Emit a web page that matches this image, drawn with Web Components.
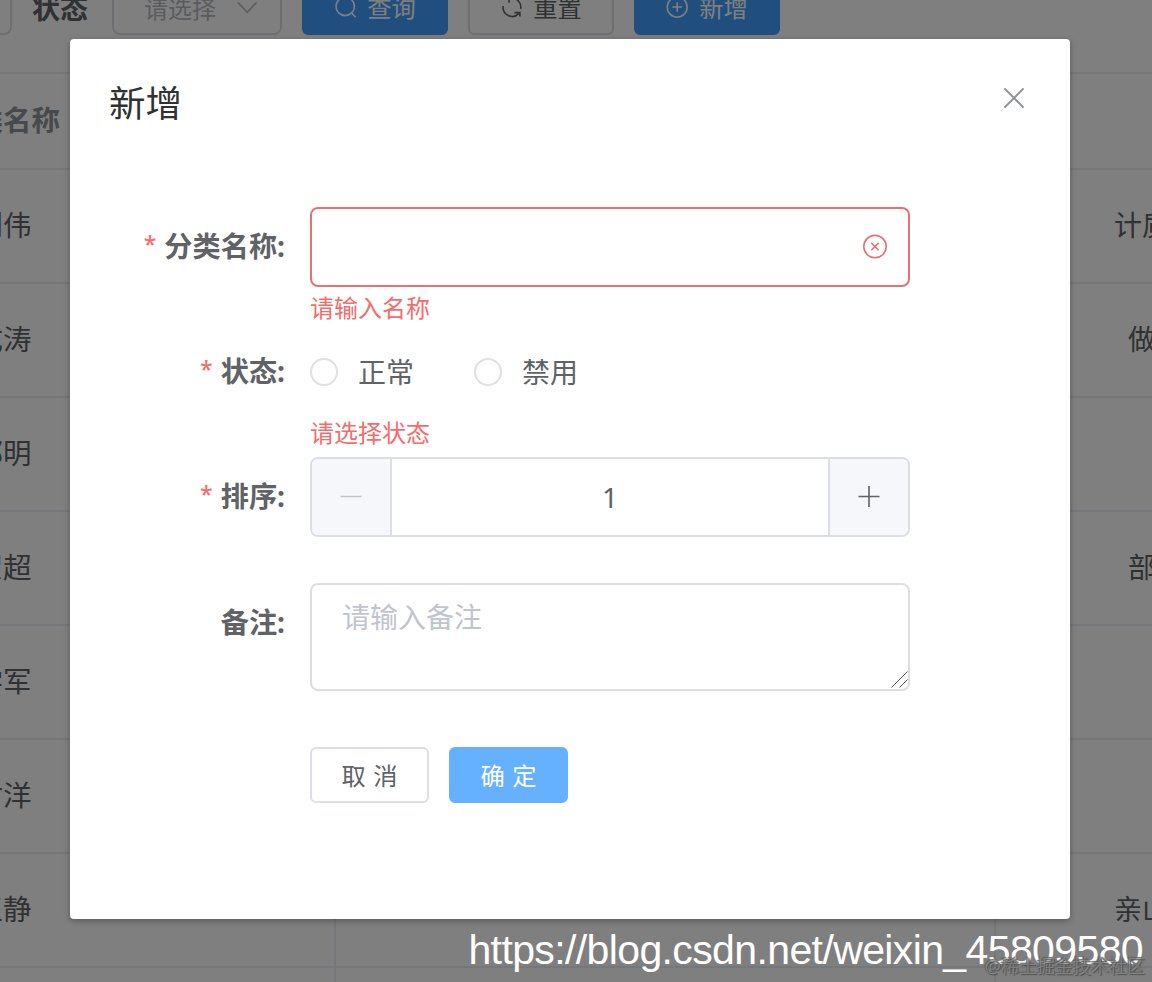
<!DOCTYPE html>
<html lang="zh-CN">
<head>
<meta charset="UTF-8">
<title>新增</title>
<style>
    html, body {
        margin: 0;
        width: 1152px;
        height: 982px;
        overflow: hidden;
    }
    body {
        position: relative;
        background: #fff;
        color: #606266;
        font-family: "Noto Sans", "Noto Sans CJK SC", sans-serif;
        font-size: 28px;
    }
</style>
</head>
<body>
<list-page>
    <filter-bar slot="filter"></filter-bar>
    <data-table slot="table"></data-table>
</list-page>

<modal-dialog heading="新增">
    <form-item label="分类名称" required error="请输入名称">
        <text-field></text-field>
    </form-item>
    <form-item label="状态" required error="请选择状态">
        <radio-option>正常</radio-option>
        <radio-option>禁用</radio-option>
    </form-item>
    <form-item label="排序" required last-gap="46">
        <number-stepper value="1"></number-stepper>
    </form-item>
    <form-item label="备注" last-gap="56">
        <text-area placeholder="请输入备注"></text-area>
    </form-item>
    <ui-button slot="footer">取 消</ui-button>
    <ui-button slot="footer" type="primary" active>确 定</ui-button>
</modal-dialog>

<page-watermark></page-watermark>

<script>
const ICONS = {
    search: '<circle cx="11.2" cy="11.4" r="9.2"/><path d="M17.7 18l3.8 4.2"/>',
    refresh: '<path d="M9 3.6A9 9 0 0 1 20.6 14M3.2 11A9 9 0 0 0 18.6 18.6M4 3.2h5v4.6M19.9 21.6v-4h-5.4"/>',
    plusCircle: '<circle cx="11.2" cy="12" r="10"/><path d="M11.2 7.2v9.6M6.4 12h9.6"/>',
    down: '<path d="M2 7.5l9.2 9.8L20.4 7.5"/>',
    close: '<path d="M2.4 2.4l19.2 19.2M21.6 2.4L2.4 21.6"/>',
    closeCircle: '<circle cx="12" cy="11.6" r="11.2"/><path d="M8.3 7.9l7.4 7.4M15.7 7.9l-7.4 7.4"/>',
    minus: '<path d="M1.5 11.5h21"/>',
    plus: '<path d="M1.5 11.5h21M12 1v21"/>'
};

class UiIcon extends HTMLElement {
    constructor() {
        super();
        this.attachShadow({ mode: 'open' });
    }

    connectedCallback() {
        const size = this.getAttribute('size') || 24;
        const weight = this.getAttribute('weight') || 1.6;
        this.shadowRoot.innerHTML = `
            <style>
                :host { display: block; flex: none; width: ${size}px; height: ${size}px; }
                svg { display: block; }
            </style>
            <svg width="${size}" height="${size}" viewBox="0 0 24 24" fill="none" overflow="visible"
                 stroke="currentColor" stroke-width="${weight}">${ICONS[this.getAttribute('name')]}</svg>
        `;
    }
}

class UiButton extends HTMLElement {
    constructor() {
        super();
        this.attachShadow({ mode: 'open' });
    }

    connectedCallback() {
        const icon = this.getAttribute('icon');
        this.shadowRoot.innerHTML = `
            <style>
                :host {
                    display: flex;
                    align-items: center;
                    justify-content: center;
                    gap: 9px;
                    box-sizing: border-box;
                    min-width: 119px;
                    height: 56px;
                    border: 2px solid #dcdfe6;
                    border-radius: 6px;
                    background: #fff;
                    color: #606266;
                    font-size: 24.3px;
                    line-height: 53px;
                    word-spacing: 1px;
                    white-space: nowrap;
                }
                :host([icon]) { width: 146px; }
                :host([type=primary]) { background: #409eff; border-color: #409eff; color: #fff; }
                :host([active]) { background: #66b1ff; border-color: #66b1ff; }
            </style>
            ${icon ? `<ui-icon name="${icon}"></ui-icon>` : ''}
            <span><slot></slot></span>
        `;
    }
}

class FilterBar extends HTMLElement {
    constructor() {
        super();
        this.attachShadow({ mode: 'open' });
    }

    connectedCallback() {
        this.shadowRoot.innerHTML = `
            <style>
                :host { display: flex; align-items: center; height: 56px; }
                .box {
                    display: flex;
                    align-items: center;
                    justify-content: space-between;
                    box-sizing: border-box;
                    height: 56px;
                    border: 2px solid #dcdfe6;
                    border-radius: 8px;
                    font-size: 24px;
                    color: #b4b8c0;
                }
                .keyword { width: 340px; margin-left: -328px; }
                .label { margin: 0 24px 0 20px; font-weight: 700; }
                .select { width: 170px; padding: 0 20px 0 30px; margin-right: 20px; }
                .buttons { display: flex; gap: 20px; }
            </style>
            <div class="box keyword"></div>
            <span class="label">状态</span>
            <div class="box select"><span>请选择</span><ui-icon name="down"></ui-icon></div>
            <div class="buttons">
                <ui-button type="primary" icon="search">查询</ui-button>
                <ui-button icon="refresh">重置</ui-button>
                <ui-button type="primary" icon="plusCircle">新增</ui-button>
            </div>
        `;
    }
}

class DataTable extends HTMLElement {
    constructor() {
        super();
        this.attachShadow({ mode: 'open' });
    }

    connectedCallback() {
        // name, description, left inset of the description
        const rows = [
            ['刘伟', '计质', 118],
            ['成涛', '做', 132],
            ['郭明', '', 0],
            ['翟超', '部', 132],
            ['学军', '', 0],
            ['付洋', '', 0],
            ['王静', '亲山', 118]
        ];
        this.shadowRoot.innerHTML = `
            <style>
                :host { display: block; width: 1482px; margin-left: -330px; border-top: 2px solid #ebeef5; }
                .row {
                    display: grid;
                    grid-template-columns: 666px 660px 156px;
                    height: 114px;
                    box-sizing: border-box;
                    border-bottom: 2px solid #ebeef5;
                    line-height: 110px;
                }
                .head { height: 96px; line-height: 93px; color: #909399; font-weight: 700; }
                .row > div { box-sizing: border-box; border-right: 2px solid #ebeef5; white-space: nowrap; }
                .row > div:last-child { border-right: 0; }
                .name { text-align: center; padding-left: 2px; font-size: 28.5px; }
            </style>
            <div class="row head"><div class="name">分类名称</div><div></div><div></div></div>
            ${rows.map(([name, desc, inset]) => `
                <div class="row">
                    <div class="name">${name}</div>
                    <div></div>
                    <div style="padding-left: ${inset}px">${desc}</div>
                </div>
            `).join('')}
            <div class="row"><div></div><div></div><div></div></div>
        `;
    }
}

class ListPage extends HTMLElement {
    constructor() {
        super();
        this.attachShadow({ mode: 'open' });
    }

    connectedCallback() {
        // scrolled a little, so the filter bar is cut by the top edge
        this.shadowRoot.innerHTML = `
            <style>
                :host { display: block; height: 982px; overflow: hidden; }
                .page { display: flex; flex-direction: column; gap: 37px; margin-top: -21px; }
            </style>
            <div class="page">
                <slot name="filter"></slot>
                <slot name="table"></slot>
            </div>
        `;
    }
}

class ModalDialog extends HTMLElement {
    constructor() {
        super();
        this.attachShadow({ mode: 'open' });
    }

    connectedCallback() {
        this.shadowRoot.innerHTML = `
            <style>
                :host {
                    position: absolute;
                    inset: 0;
                    display: flex;
                    justify-content: center;
                    align-items: flex-start;
                    background: rgba(0, 0, 0, 0.5);
                }
                .dialog {
                    box-sizing: border-box;
                    width: 1000px;
                    height: 880px;
                    margin: 39px 12px 0 0;
                    border-radius: 4px;
                    background: #fff;
                    box-shadow: 0 2px 6px rgba(0, 0, 0, 0.3);
                }
                header {
                    display: flex;
                    justify-content: space-between;
                    align-items: center;
                    height: 48px;
                    padding: 40px 44px 80px 39px;
                    color: #303133;
                    font-size: 36.5px;
                    line-height: 48px;
                }
                header ui-icon { color: #909399; margin-bottom: 10px; }
                .body { padding: 0 160px 0 40px; }
                footer { display: flex; gap: 20px; padding-left: 200px; }
            </style>
            <div class="dialog">
                <header>
                    <span>${this.getAttribute('heading')}</span>
                    <ui-icon name="close" weight="2"></ui-icon>
                </header>
                <div class="body">
                    <slot></slot>
                    <footer><slot name="footer"></slot></footer>
                </div>
            </div>
        `;
    }
}

class FormItem extends HTMLElement {
    constructor() {
        super();
        this.attachShadow({ mode: 'open' });
    }

    connectedCallback() {
        const error = this.getAttribute('error') || '';
        const gap = this.getAttribute('last-gap') || 45;
        this.shadowRoot.innerHTML = `
            <style>
                :host { display: flex; }
                .label {
                    display: flex;
                    justify-content: flex-end;
                    box-sizing: border-box;
                    width: 200px;
                    padding-right: 25px;
                    font-size: 28.2px;
                    font-weight: 700;
                    line-height: 79px;
                    height: 80px;
                }
                .label i {
                    margin-right: 8px;
                    color: #f56c6c;
                    font-size: 23px;
                    font-style: normal;
                    font-weight: 500;
                    line-height: 74px;
                }
                .content { flex: 1; }
                .control { display: flex; align-items: center; min-height: 80px; }
                .tip { height: ${gap}px; font-size: 24px; line-height: 42px; color: #f56c6c; }
            </style>
            <div class="label">${this.hasAttribute('required') ? '<i>*</i>' : ''}${this.getAttribute('label')}:</div>
            <div class="content">
                <div class="control"><slot></slot></div>
                <div class="tip">${error}</div>
            </div>
        `;
    }
}

class TextField extends HTMLElement {
    constructor() {
        super();
        this.attachShadow({ mode: 'open' });
    }

    connectedCallback() {
        this.shadowRoot.innerHTML = `
            <style>
                :host {
                    display: flex;
                    flex: 1;
                    align-items: center;
                    justify-content: flex-end;
                    box-sizing: border-box;
                    height: 80px;
                    padding-right: 21px;
                    border: 2px solid #e57273;
                    border-radius: 8px;
                    color: #e57273;
                }
            </style>
            <ui-icon name="closeCircle"></ui-icon>
        `;
    }
}

class RadioOption extends HTMLElement {
    constructor() {
        super();
        this.attachShadow({ mode: 'open' });
    }

    connectedCallback() {
        this.shadowRoot.innerHTML = `
            <style>
                :host { display: flex; align-items: center; gap: 20px; margin-right: 60px; line-height: 78px; height: 80px; }
                i { box-sizing: border-box; width: 28px; height: 28px; border: 2px solid #dfe0e3; border-radius: 50%; }
            </style>
            <i></i><span><slot></slot></span>
        `;
    }
}

class NumberStepper extends HTMLElement {
    constructor() {
        super();
        this.attachShadow({ mode: 'open' });
    }

    connectedCallback() {
        this.shadowRoot.innerHTML = `
            <style>
                :host {
                    display: grid;
                    flex: 1;
                    grid-template-columns: 80px 1fr 80px;
                    box-sizing: border-box;
                    height: 80px;
                    border: 2px solid #dcdfe2;
                    border-radius: 8px;
                    overflow: hidden;
                }
                div { display: flex; align-items: center; justify-content: center; box-sizing: border-box; }
                .step { background: #f5f7fa; }
                .minus { border-right: 2px solid #dcdfe2; color: #c0c4cc; }
                .plus { border-left: 2px solid #dcdfe2; }
            </style>
            <div class="step minus"><ui-icon name="minus" weight="1.6"></ui-icon></div>
            <div>${this.getAttribute('value')}</div>
            <div class="step plus"><ui-icon name="plus" weight="1.6"></ui-icon></div>
        `;
    }
}

class TextArea extends HTMLElement {
    constructor() {
        super();
        this.attachShadow({ mode: 'open' });
    }

    connectedCallback() {
        this.shadowRoot.innerHTML = `
            <style>
                :host {
                    display: flex;
                    flex: 1;
                    justify-content: space-between;
                    align-items: flex-end;
                    box-sizing: border-box;
                    height: 108px;
                    border: 2px solid #dcdfe2;
                    border-radius: 8px;
                    color: #c0c4cc;
                }
                span { align-self: flex-start; padding: 11px 0 0 30px; line-height: 42px; }
                svg { display: block; }
            </style>
            <span>${this.getAttribute('placeholder')}</span>
            <svg width="17" height="18" fill="none" stroke="#555" stroke-width="1"><path d="M0.5 16.5L16.5 0.5M8.5 16.5L16.5 8.5"/></svg>
        `;
    }
}

class PageWatermark extends HTMLElement {
    constructor() {
        super();
        this.attachShadow({ mode: 'open' });
    }

    connectedCallback() {
        this.shadowRoot.innerHTML = `
            <style>
                :host { position: absolute; inset: 0; white-space: nowrap; }
                .url {
                    position: absolute;
                    right: 9px;
                    bottom: 9px;
                    color: #fff;
                    font: 41px/46px "Liberation Sans", sans-serif;
                    letter-spacing: -0.62px;
                }
                .site {
                    position: absolute;
                    right: 7px;
                    bottom: 3px;
                    font-size: 18px;
                    line-height: 26px;
                    color: rgba(150, 150, 150, 0.6);
                    text-shadow: 1px 1px 1px #505050, -1px -1px 1px #606060;
                }
            </style>
            <div class="url">https://blog.csdn.net/weixin_45809580</div>
            <div class="site">@稀土掘金技术社区</div>
        `;
    }
}

customElements.define('ui-icon', UiIcon);
customElements.define('ui-button', UiButton);
customElements.define('filter-bar', FilterBar);
customElements.define('data-table', DataTable);
customElements.define('list-page', ListPage);
customElements.define('modal-dialog', ModalDialog);
customElements.define('form-item', FormItem);
customElements.define('text-field', TextField);
customElements.define('radio-option', RadioOption);
customElements.define('number-stepper', NumberStepper);
customElements.define('text-area', TextArea);
customElements.define('page-watermark', PageWatermark);
</script>
</body>
</html>
